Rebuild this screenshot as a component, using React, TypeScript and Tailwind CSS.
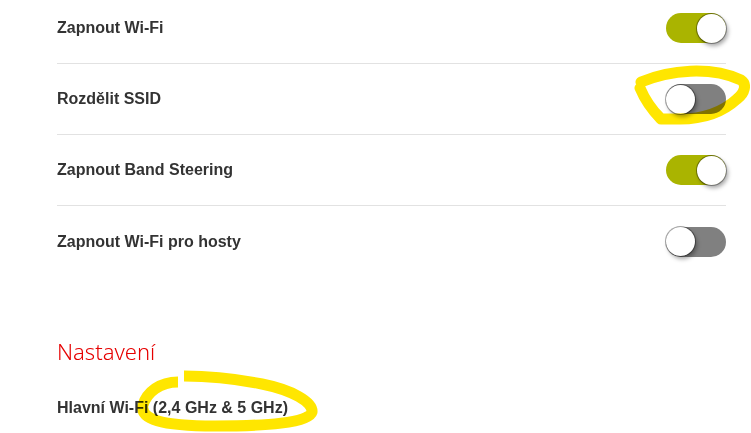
import React from "react";

function Toggle({ on }: { on: boolean }) {
  return (
    <div
      className={
        "relative h-[30px] w-[60px] rounded-full flex items-center " +
        (on ? "bg-[#aab400] justify-end" : "bg-[#808080] justify-start")
      }
    >
      <div className="h-[29px] w-[29px] rounded-full bg-white shadow-[0_0_0_1px_rgba(0,0,0,0.35),2px_3px_4px_rgba(0,0,0,0.35)]" />
    </div>
  );
}

const rows: { label: string; on: boolean }[] = [
  { label: "Zapnout Wi-Fi", on: true },
  { label: "Rozdělit SSID", on: false },
  { label: "Zapnout Band Steering", on: true },
  { label: "Zapnout Wi-Fi pro hosty", on: false },
];

export default function App() {
  return (
    <div className="relative h-[433px] w-[751px] overflow-hidden bg-white">
      <div className="pl-[57px] pr-[25px] mt-[-7px]">
        {rows.map((r, i) => (
          <div
            key={r.label}
            className={
              "flex h-[71px] items-center justify-between " +
              (i < rows.length - 1 ? "border-b border-[#e2e2e2]" : "")
            }
          >
            <span className="font-['Liberation_Sans',Arial,sans-serif] text-[16px] font-bold text-[#333333]">
              {r.label}
            </span>
            <Toggle on={r.on} />
          </div>
        ))}
        <h2 className="mt-[59px] font-['Noto_Sans',sans-serif] text-[22px] leading-[30px] font-light text-[#e60000]">
          Nastavení
        </h2>
        <div className="mt-[30px] font-['Liberation_Sans',Arial,sans-serif] text-[16px] leading-[24px] font-bold text-[#333333]">
          Hlavní Wi-Fi (2,4 GHz &amp; 5 GHz)
        </div>
      </div>
      <svg
        className="pointer-events-none absolute left-0 top-0 mix-blend-multiply"
        width="751"
        height="433"
        viewBox="0 0 751 433"
      >
        <path
          d="M 641 82 C 670 70, 710 66, 741 80 C 747 84, 745 93, 737 99 C 724 111, 705 119, 680 119 L 661 119 C 652 110, 645 100, 640 88"
          fill="none"
          stroke="#ffe600"
          strokeWidth="11"
          strokeLinecap="round"
          strokeLinejoin="round"
        />
        <path
          d="M 178 382 C 160 382, 147 392, 143 405 C 140 419, 160 426, 215 426 C 265 426, 309 423, 312 412 C 313 402, 292 390, 262 384 C 232 378, 205 376, 184 376"
          fill="none"
          stroke="#ffe600"
          strokeWidth="11"
          strokeLinecap="butt"
          strokeLinejoin="round"
        />
      </svg>
    </div>
  );
}
